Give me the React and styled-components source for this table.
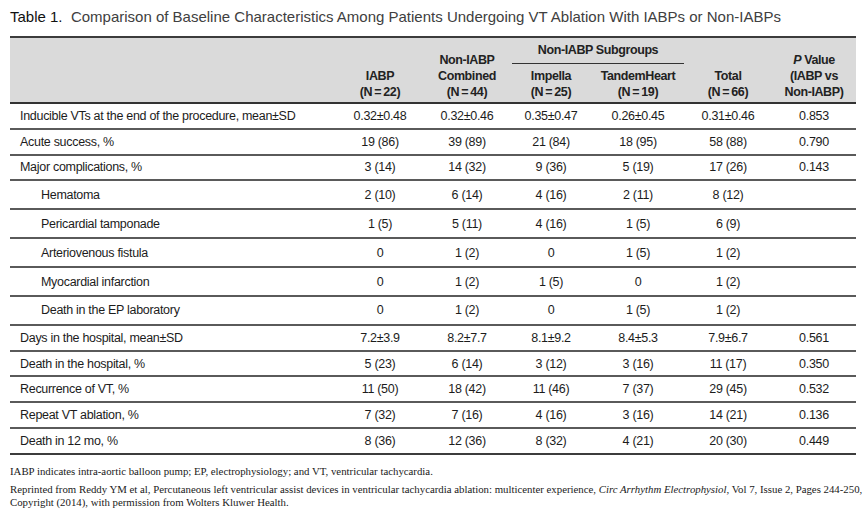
import React from "react";
import styled, { createGlobalStyle } from "styled-components";

const GlobalStyle = createGlobalStyle`
  html, body {
    margin: 0;
    padding: 0;
    background: #fff;
  }
  body {
    font-family: "Liberation Sans", Arial, sans-serif;
    color: #1c1c1c;
  }
`;

const columns = [326, 88, 86, 82, 92, 88, 84];

// thin spaces around "=" like the printed table
const n = (v) => `(N\u2009=\u2009${v})`;

const rows = [
  { label: "Inducible VTs at the end of the procedure, mean\u00b1SD", values: ["0.32\u00b10.48", "0.32\u00b10.46", "0.35\u00b10.47", "0.26\u00b10.45", "0.31\u00b10.46", "0.853"] },
  { label: "Acute success, %", values: ["19 (86)", "39 (89)", "21 (84)", "18 (95)", "58 (88)", "0.790"] },
  { label: "Major complications, %", values: ["3 (14)", "14 (32)", "9 (36)", "5 (19)", "17 (26)", "0.143"] },
  { label: "Hematoma", sub: true, values: ["2 (10)", "6 (14)", "4 (16)", "2 (11)", "8 (12)", ""] },
  { label: "Pericardial tamponade", sub: true, values: ["1 (5)", "5 (11)", "4 (16)", "1 (5)", "6 (9)", ""] },
  { label: "Arteriovenous fistula", sub: true, values: ["0", "1 (2)", "0", "1 (5)", "1 (2)", ""] },
  { label: "Myocardial infarction", sub: true, values: ["0", "1 (2)", "1 (5)", "0", "1 (2)", ""] },
  { label: "Death in the EP laboratory", sub: true, values: ["0", "1 (2)", "0", "1 (5)", "1 (2)", ""] },
  { label: "Days in the hospital, mean\u00b1SD", values: ["7.2\u00b13.9", "8.2\u00b17.7", "8.1\u00b19.2", "8.4\u00b15.3", "7.9\u00b16.7", "0.561"] },
  { label: "Death in the hospital, %", values: ["5 (23)", "6 (14)", "3 (12)", "3 (16)", "11 (17)", "0.350"] },
  { label: "Recurrence of VT, %", values: ["11 (50)", "18 (42)", "11 (46)", "7 (37)", "29 (45)", "0.532"] },
  { label: "Repeat VT ablation, %", values: ["7 (32)", "7 (16)", "4 (16)", "3 (16)", "14 (21)", "0.136"] },
  { label: "Death in 12 mo, %", values: ["8 (36)", "12 (36)", "8 (32)", "4 (21)", "20 (30)", "0.449"] },
];

const App = () => {
  return (
    <Page>
      <GlobalStyle />
      <Title>
        <strong>Table 1.</strong>&nbsp; Comparison of Baseline Characteristics Among
        Patients Undergoing VT Ablation With IABPs or Non-IABPs
      </Title>
      <Table>
        <colgroup>
          {columns.map((w, i) => (
            <col key={i} style={{ width: w }} />
          ))}
        </colgroup>
        <thead>
          <HeadRow $h={27}>
            <HeadCell rowSpan={2} />
            <HeadCell rowSpan={2}>
              IABP
              <br />
              {n(22)}
            </HeadCell>
            <HeadCell rowSpan={2}>
              Non-IABP
              <br />
              Combined
              <br />
              {n(44)}
            </HeadCell>
            <GroupCell colSpan={2}>
              <GroupLabel>Non-IABP Subgroups</GroupLabel>
            </GroupCell>
            <HeadCell rowSpan={2}>
              Total
              <br />
              {n(66)}
            </HeadCell>
            <HeadCell rowSpan={2}>
              <em>P</em> Value
              <br />
              (IABP vs
              <br />
              Non-IABP)
            </HeadCell>
          </HeadRow>
          <HeadRow $h={39}>
            <HeadCell>
              Impella
              <br />
              {n(25)}
            </HeadCell>
            <HeadCell>
              TandemHeart
              <br />
              {n(19)}
            </HeadCell>
          </HeadRow>
        </thead>
        <tbody>
          {rows.map((row) => (
            <Row key={row.label} $sub={row.sub}>
              <LabelCell $sub={row.sub}>{row.label}</LabelCell>
              {row.values.map((v, i) => (
                <Cell key={i}>{v}</Cell>
              ))}
            </Row>
          ))}
        </tbody>
      </Table>
      <Notes>
        <p>
          IABP indicates intra-aortic balloon pump; EP, electrophysiology; and VT,
          ventricular tachycardia.
        </p>
        <p>
          Reprinted from Reddy YM et al, Percutaneous left ventricular assist devices in
          ventricular tachycardia ablation: multicenter experience,{" "}
          <em>Circ Arrhythm Electrophysiol,</em> Vol 7, Issue 2, Pages 244-250,
          <br />
          Copyright (2014), with permission from Wolters Kluwer Health.
        </p>
      </Notes>
    </Page>
  );
};

const Page = styled.div`
  width: 866px;
  height: 515px;
  padding: 8px 10px 0;
  box-sizing: border-box;
  overflow: hidden;
`;

const Title = styled.h1`
  margin: 0 0 10px;
  font-size: 15px;
  font-weight: normal;
  line-height: 18px;
  color: #404040;
  white-space: nowrap;

  strong {
    font-weight: normal;
    color: #111;
  }
`;

const Table = styled.table`
  width: 846px;
  table-layout: fixed;
  border-collapse: collapse;
  font-size: 12.5px;
  letter-spacing: -0.3px;
  border-top: 2px solid #3c3c3c;
  border-bottom: 2px solid #3c3c3c;
`;

const HeadRow = styled.tr`
  height: ${(p) => p.$h}px;
`;

const HeadCell = styled.th`
  background: #dadada;
  font-weight: bold;
  text-align: center;
  vertical-align: bottom;
  line-height: 16px;
  padding: 0 0 2px;
  color: #222;
  letter-spacing: -0.4px;

  em {
    font-style: italic;
  }
`;

const GroupCell = styled.th`
  background: #dadada;
  padding: 4px 0 0;
  vertical-align: top;
`;

const GroupLabel = styled.div`
  margin: 0 0 0 2px;
  padding-bottom: 5px;
  border-bottom: 1px solid #333;
  line-height: 16px;
  font-weight: bold;
  color: #222;
  letter-spacing: -0.4px;
`;

const Row = styled.tr`
  height: ${(p) => (p.$sub ? "28.9px" : "25.8px")};
  border-top: 2px solid #5a5a5a;

  &:first-child {
    border-top-color: #333;
  }
`;

const LabelCell = styled.td`
  padding: 0 0 0 ${(p) => (p.$sub ? "31px" : "10px")};
  text-align: left;
  white-space: nowrap;
`;

const Cell = styled.td`
  padding: 0;
  text-align: center;
  white-space: nowrap;
`;

const Notes = styled.div`
  margin-top: 10px;
  font-family: "Liberation Serif", "Times New Roman", serif;
  font-size: 10.8px;
  line-height: 13px;
  color: #1a1a1a;

  p {
    margin: 0 0 5px;
    white-space: nowrap;
  }
`;

export default App;
